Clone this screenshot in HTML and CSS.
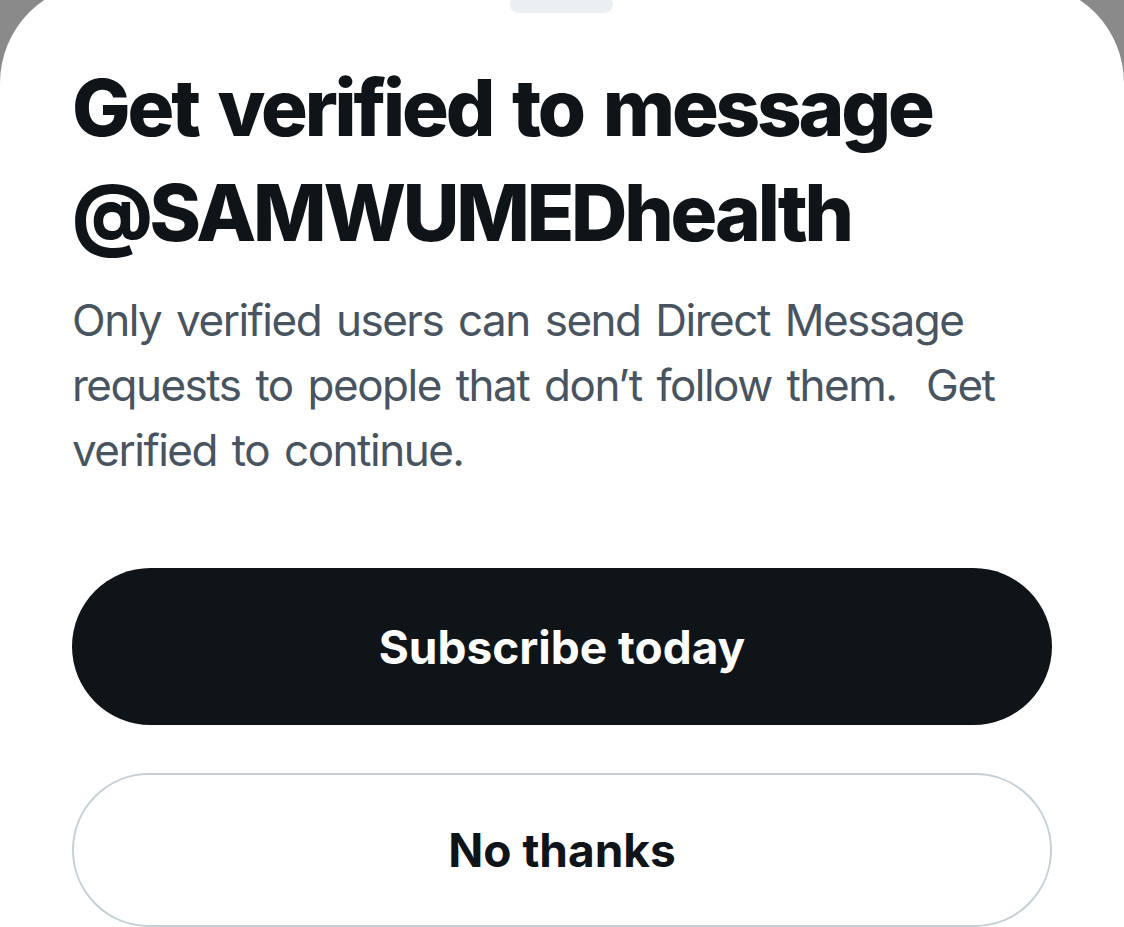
FILE: index.html
```html
<!DOCTYPE html>
<html lang="en">
<head>
<meta charset="utf-8">
<title>Get verified</title>
<link rel="stylesheet" href="styles.css">
</head>
<body>
<div class="sheet">
  <div class="handle"></div>
  <h1 class="title">Get verified to message<br>@SAMWUMEDhealth</h1>
  <p class="desc">Only verified users can send Direct Message<br>requests to people that don’t follow them.&nbsp; Get<br>verified to continue.</p>
  <div class="actions">
    <button class="btn btn-primary" type="button">Subscribe today</button>
    <button class="btn btn-secondary" type="button">No thanks</button>
  </div>
</div>
</body>
</html>
```

FILE: styles.css
```css
html, body {
  margin: 0;
  padding: 0;
  height: 100%;
  overflow: hidden;
}

body {
  background: #8a8a8a;
  font-family: Inter, "Noto Sans", "Liberation Sans", sans-serif;
}

.sheet {
  position: relative;
  margin-top: -17px;
  background: #ffffff;
  border-radius: 100px 100px 0 0;
  min-height: 1000px;
  padding: 72px 72px 0 72px;
  box-sizing: border-box;
}

.handle {
  position: absolute;
  top: 13px;
  left: 510px;
  width: 103px;
  height: 17px;
  border-radius: 9px;
  background: #eceff1;
}

.title {
  margin: 0;
  font-size: 78px;
  line-height: 105px;
  font-weight: 800;
  color: #0f1419;
  letter-spacing: -3.2px;
  word-spacing: 6px;
  white-space: nowrap;
}

.desc {
  margin: 23px 0 0 0;
  font-size: 44px;
  line-height: 65px;
  font-weight: 400;
  color: #48545f;
  letter-spacing: -1.5px;
  word-spacing: 4px;
  white-space: nowrap;
}

.actions {
  display: flex;
  flex-direction: column;
  gap: 48px;
  margin-top: 85px;
}

.btn {
  display: flex;
  align-items: center;
  justify-content: center;
  width: 100%;
  border-radius: 80px;
  font-family: inherit;
  font-size: 46px;
  font-weight: 700;
  cursor: pointer;
  padding: 0;
}

.btn-primary {
  height: 157px;
  background: #0f1419;
  color: #ffffff;
  border: none;
}

.btn-secondary {
  height: 154px;
  background: #ffffff;
  color: #0f1419;
  border: 2px solid #c4cfd6;
}
```
